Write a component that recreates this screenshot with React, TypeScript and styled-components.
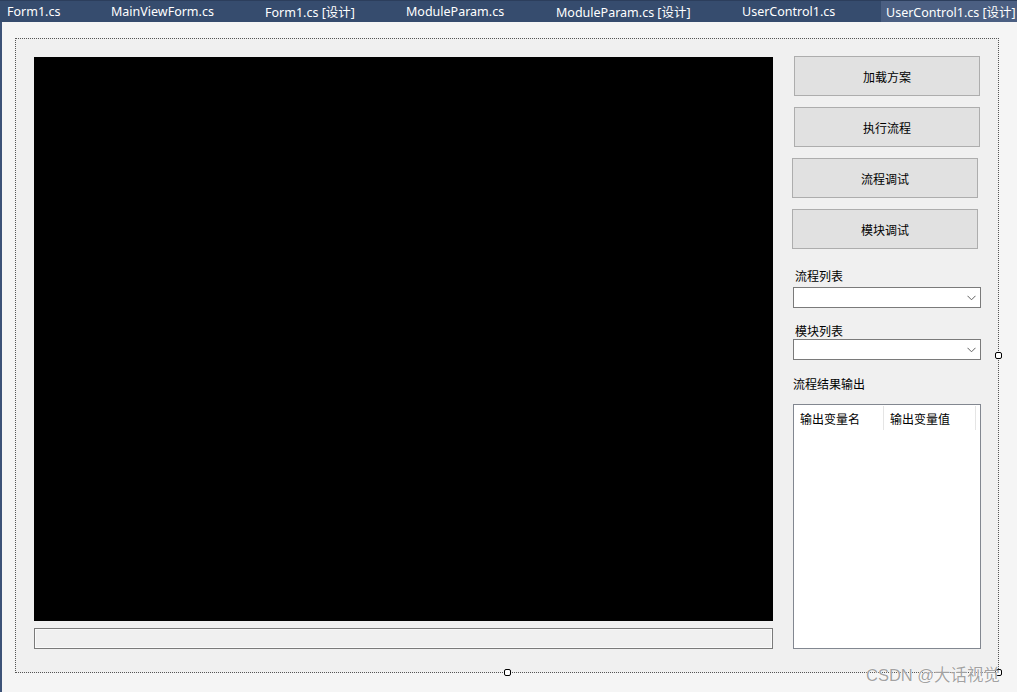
import React from "react";
import styled, { createGlobalStyle } from "styled-components";

const Global = createGlobalStyle`
  * { box-sizing: border-box; }
  html, body { margin: 0; padding: 0; background: #f5f5f5; }
  body { font-family: "Noto Sans", "Noto Sans CJK SC", sans-serif; }
`;

const Page = styled.div`
  position: relative;
  width: 1017px;
  height: 692px;
  display: flex;
  flex-direction: column;
  background: #f5f5f5;
  overflow: hidden;
`;

const TabBar = styled.div`
  height: 22px;
  display: flex;
  background: #364c6e;
  border-top: 1px solid #2c3e5c;
  flex-shrink: 0;
`;

const Tab = styled.div<{ $w: number; $active?: boolean }>`
  width: ${(p) => p.$w}px;
  flex-shrink: 0;
  padding-left: ${(p) => (p.$active ? 5 : 7)}px;
  display: flex;
  align-items: center;
  font-family: "Noto Sans", "Noto Sans CJK SC", sans-serif;
  font-size: 12.5px;
  color: #ffffff;
  white-space: nowrap;
  background: ${(p) => (p.$active ? "#4b5f82" : "transparent")};
`;

const Body = styled.div`
  flex: 1;
  border-left: 2px solid #3d5378;
  padding: 16px 0 0 13px;
`;

const Form = styled.div`
  position: relative;
  width: 984px;
  height: 635px;
  border: 1px dotted #555;
  background: #f0f0f0;
  display: flex;
  gap: 19px;
  padding: 18px 0 0 18px;
`;

const LeftCol = styled.div`
  width: 739px;
  display: flex;
  flex-direction: column;
  gap: 7px;
`;

const Picture = styled.div`
  height: 564px;
  background: #000;
`;

const StatusBox = styled.div`
  height: 21px;
  border: 1px solid #7a7a7a;
  box-shadow: inset 0 0 0 1px #fafafa;
  background: #f0f0f0;
`;

const RightCol = styled.div`
  width: 190px;
  display: flex;
  flex-direction: column;
  margin-top: -1px;
`;

const Button = styled.div<{ $ml: number }>`
  width: 186px;
  height: 40px;
  margin-left: ${(p) => p.$ml}px;
  margin-bottom: 11px;
  background: #e1e1e1;
  border: 1px solid #adadad;
  display: flex;
  align-items: center;
  justify-content: center;
  font-family: "Noto Sans CJK SC", sans-serif;
  font-size: 12px;
  color: #000;
`;

const Label = styled.div<{ $ml: number; $mt: number }>`
  margin-left: ${(p) => p.$ml}px;
  margin-top: ${(p) => p.$mt}px;
  height: 14px;
  line-height: 14px;
  font-family: "Noto Sans CJK SC", sans-serif;
  font-size: 12px;
  color: #000;
`;

const Combo = styled.div<{ $mt: number }>`
  margin-left: 1px;
  margin-top: ${(p) => p.$mt}px;
  width: 188px;
  height: 21px;
  background: #fff;
  border: 1px solid #7a7a7a;
  display: flex;
  align-items: center;
  justify-content: flex-end;
  padding-right: 4px;
`;

const ListView = styled.div`
  margin-left: 1px;
  margin-top: 13px;
  width: 188px;
  height: 245px;
  background: #fff;
  border: 1px solid #828790;
`;

const Header = styled.div`
  display: flex;
  height: 26px;
  padding-top: 1px;
`;

const HeaderCell = styled.div<{ $w: number }>`
  width: ${(p) => p.$w}px;
  height: 24px;
  padding-left: 6px;
  display: flex;
  align-items: center;
  border-right: 1px solid #e5e5e5;
  font-family: "Noto Sans CJK SC", sans-serif;
  font-size: 12px;
  color: #000;
`;

const Handle = styled.div<{ $x: number; $y: number }>`
  position: absolute;
  left: ${(p) => p.$x}px;
  top: ${(p) => p.$y}px;
  width: 7px;
  height: 7px;
  border: 1px solid #000;
  border-radius: 2px;
  background: #fff;
`;

const Watermark = styled.div`
  position: absolute;
  left: 866px;
  top: 662px;
  font-family: "Liberation Sans", "Noto Sans CJK SC", sans-serif;
  font-size: 16.5px;
  color: rgba(120, 120, 120, 0.7);
  text-shadow: 0 0 1px #fff, 0 0 1px #fff;
  white-space: nowrap;
`;

const Chevron = () => (
  <svg width="9" height="6" viewBox="0 0 9 6">
    <path d="M0.5 0.8 L4.5 4.8 L8.5 0.8" fill="none" stroke="#606060" strokeWidth="1" />
  </svg>
);

const tabs: { t: string; w: number; active?: boolean }[] = [
  { t: "Form1.cs", w: 104 },
  { t: "MainViewForm.cs", w: 154 },
  { t: "Form1.cs [设计]", w: 141 },
  { t: "ModuleParam.cs", w: 150 },
  { t: "ModuleParam.cs [设计]", w: 186 },
  { t: "UserControl1.cs", w: 146 },
  { t: "UserControl1.cs [设计]", w: 136, active: true },
];

export default function App() {
  return (
    <Page>
      <Global />
      <TabBar>
        {tabs.map((t) => (
          <Tab key={t.t} $w={t.w} $active={t.active}>
            {t.t}
          </Tab>
        ))}
      </TabBar>
      <Body>
        <Form>
          <LeftCol>
            <Picture />
            <StatusBox />
          </LeftCol>
          <RightCol>
            <Button $ml={2}>加载方案</Button>
            <Button $ml={2}>执行流程</Button>
            <Button $ml={0}>流程调试</Button>
            <Button $ml={0}>模块调试</Button>
            <Label $ml={3} $mt={9}>流程列表</Label>
            <Combo $mt={4}>
              <Chevron />
            </Combo>
            <Label $ml={3} $mt={16}>模块列表</Label>
            <Combo $mt={1}>
              <Chevron />
            </Combo>
            <Label $ml={1} $mt={17}>流程结果输出</Label>
            <ListView>
              <Header>
                <HeaderCell $w={90}>输出变量名</HeaderCell>
                <HeaderCell $w={92}>输出变量值</HeaderCell>
              </Header>
            </ListView>
          </RightCol>
          <Handle $x={979} $y={313} />
          <Handle $x={488} $y={630} />
          <Handle $x={979} $y={630} />
        </Form>
      </Body>
      <Watermark>CSDN @大话视觉</Watermark>
    </Page>
  );
}
